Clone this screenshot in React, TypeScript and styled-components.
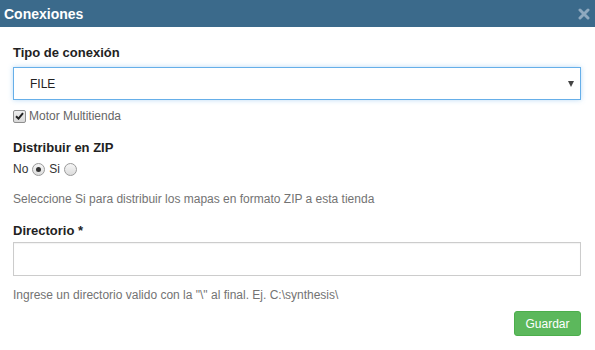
import React from "react";
import styled, { createGlobalStyle } from "styled-components";

const GlobalStyle = createGlobalStyle`
  html, body {
    margin: 0;
    padding: 0;
    background: #fff;
  }
  body {
    font-family: "Liberation Sans", Arial, sans-serif;
  }
`;

const Modal = styled.div`
  width: 595px;
  height: 350px;
  background: #fff;
  display: flex;
  flex-direction: column;
`;

const Header = styled.div`
  height: 27px;
  background: #3b6a8b;
  display: flex;
  align-items: center;
  justify-content: space-between;
  padding: 0 5px 0 4px;
`;

const Title = styled.h4`
  margin: 0;
  color: #fff;
  font-size: 14px;
  font-weight: bold;
  line-height: 1;
`;

const Close = styled.span`
  display: flex;
  margin-top: 1px;
`;

const Body = styled.div`
  padding: 0 14px 0 13px;
  display: flex;
  flex-direction: column;
`;

const Label = styled.label<{ $top: number }>`
  display: block;
  margin-top: ${(p) => p.$top}px;
  font-size: 13px;
  font-weight: bold;
  color: #222;
  line-height: 16px;
`;

const SelectBox = styled.div`
  margin-top: 6px;
  height: 33px;
  box-sizing: border-box;
  border: 1px solid #66afe9;
  box-shadow: 0 0 5px rgba(102, 175, 233, 0.45);
  display: flex;
  align-items: center;
  justify-content: space-between;
  padding: 0 6px 0 16px;
  font-size: 12px;
  color: #222;
`;

const Caret = styled.span`
  width: 0;
  height: 0;
  border-left: 3.5px solid transparent;
  border-right: 3.5px solid transparent;
  border-top: 6px solid #444;
`;

const CheckRow = styled.div`
  margin-top: 9px;
  display: flex;
  align-items: center;
  gap: 3px;
  font-size: 12px;
  color: #666;
`;

const Box = styled.span`
  width: 11px;
  height: 11px;
  border: 1px solid #8f8f8f;
  border-radius: 2px;
  background: linear-gradient(#eee, #d8d8d8);
  display: flex;
  align-items: center;
  justify-content: center;
`;

const RadioRow = styled.div`
  margin-top: 6px;
  display: flex;
  align-items: center;
  font-size: 12px;
  color: #333;
  line-height: 14px;
`;

const Radio = styled.span<{ $checked?: boolean }>`
  width: 11px;
  height: 11px;
  border-radius: 50%;
  border: 1px solid #9a9a9a;
  background: linear-gradient(#f6f6f6, #dcdcdc);
  margin: 0 4px 0 4px;
  display: flex;
  align-items: center;
  justify-content: center;
  &::after {
    content: "";
    display: ${(p) => (p.$checked ? "block" : "none")};
    width: 5px;
    height: 5px;
    border-radius: 50%;
    background: #333;
  }
`;

const Help = styled.p<{ $top: number }>`
  margin: ${(p) => p.$top}px 0 0;
  font-size: 12px;
  color: #737373;
  line-height: 14px;
`;

const TextInput = styled.div`
  margin-top: 3px;
  height: 34px;
  box-sizing: border-box;
  border: 1px solid #ccc;
  box-shadow: inset 0 1px 1px rgba(0, 0, 0, 0.05);
`;

const Footer = styled.div`
  display: flex;
  justify-content: flex-end;
  margin-top: 9px;
`;

const Button = styled.button`
  height: 25px;
  width: 67px;
  background: #5cb85c;
  border: 1px solid #4cae4c;
  border-radius: 3px;
  color: #fff;
  font-family: "Liberation Sans", Arial, sans-serif;
  font-size: 12px;
  padding: 0;
`;

export default function App() {
  return (
    <Modal>
      <GlobalStyle />
      <Header>
        <Title>Conexiones</Title>
        <Close>
          <svg width="12" height="12" viewBox="0 0 12 12">
            <path
              d="M2 2 L10 10 M10 2 L2 10"
              stroke="#8fa9bf"
              strokeWidth="3"
              strokeLinecap="round"
            />
          </svg>
        </Close>
      </Header>
      <Body>
        <Label $top={18}>Tipo de conexión</Label>
        <SelectBox>
          <span>FILE</span>
          <Caret />
        </SelectBox>
        <CheckRow>
          <Box>
            <svg width="9" height="8" viewBox="0 0 9 8">
              <path d="M1 4.2 L3.5 6.6 L8 1.2" stroke="#222" strokeWidth="2" fill="none" />
            </svg>
          </Box>
          <span>Motor Multitienda</span>
        </CheckRow>
        <Label $top={17}>Distribuir en ZIP</Label>
        <RadioRow>
          <span>No</span>
          <Radio $checked />
          <span>Si</span>
          <Radio />
        </RadioRow>
        <Help $top={16}>Seleccione Si para distribuir los mapas en formato ZIP a esta tienda</Help>
        <Label $top={17}>Directorio *</Label>
        <TextInput />
        <Help $top={12}>Ingrese un directorio valido con la "\" al final. Ej. C:\synthesis\</Help>
        <Footer>
          <Button>Guardar</Button>
        </Footer>
      </Body>
    </Modal>
  );
}
